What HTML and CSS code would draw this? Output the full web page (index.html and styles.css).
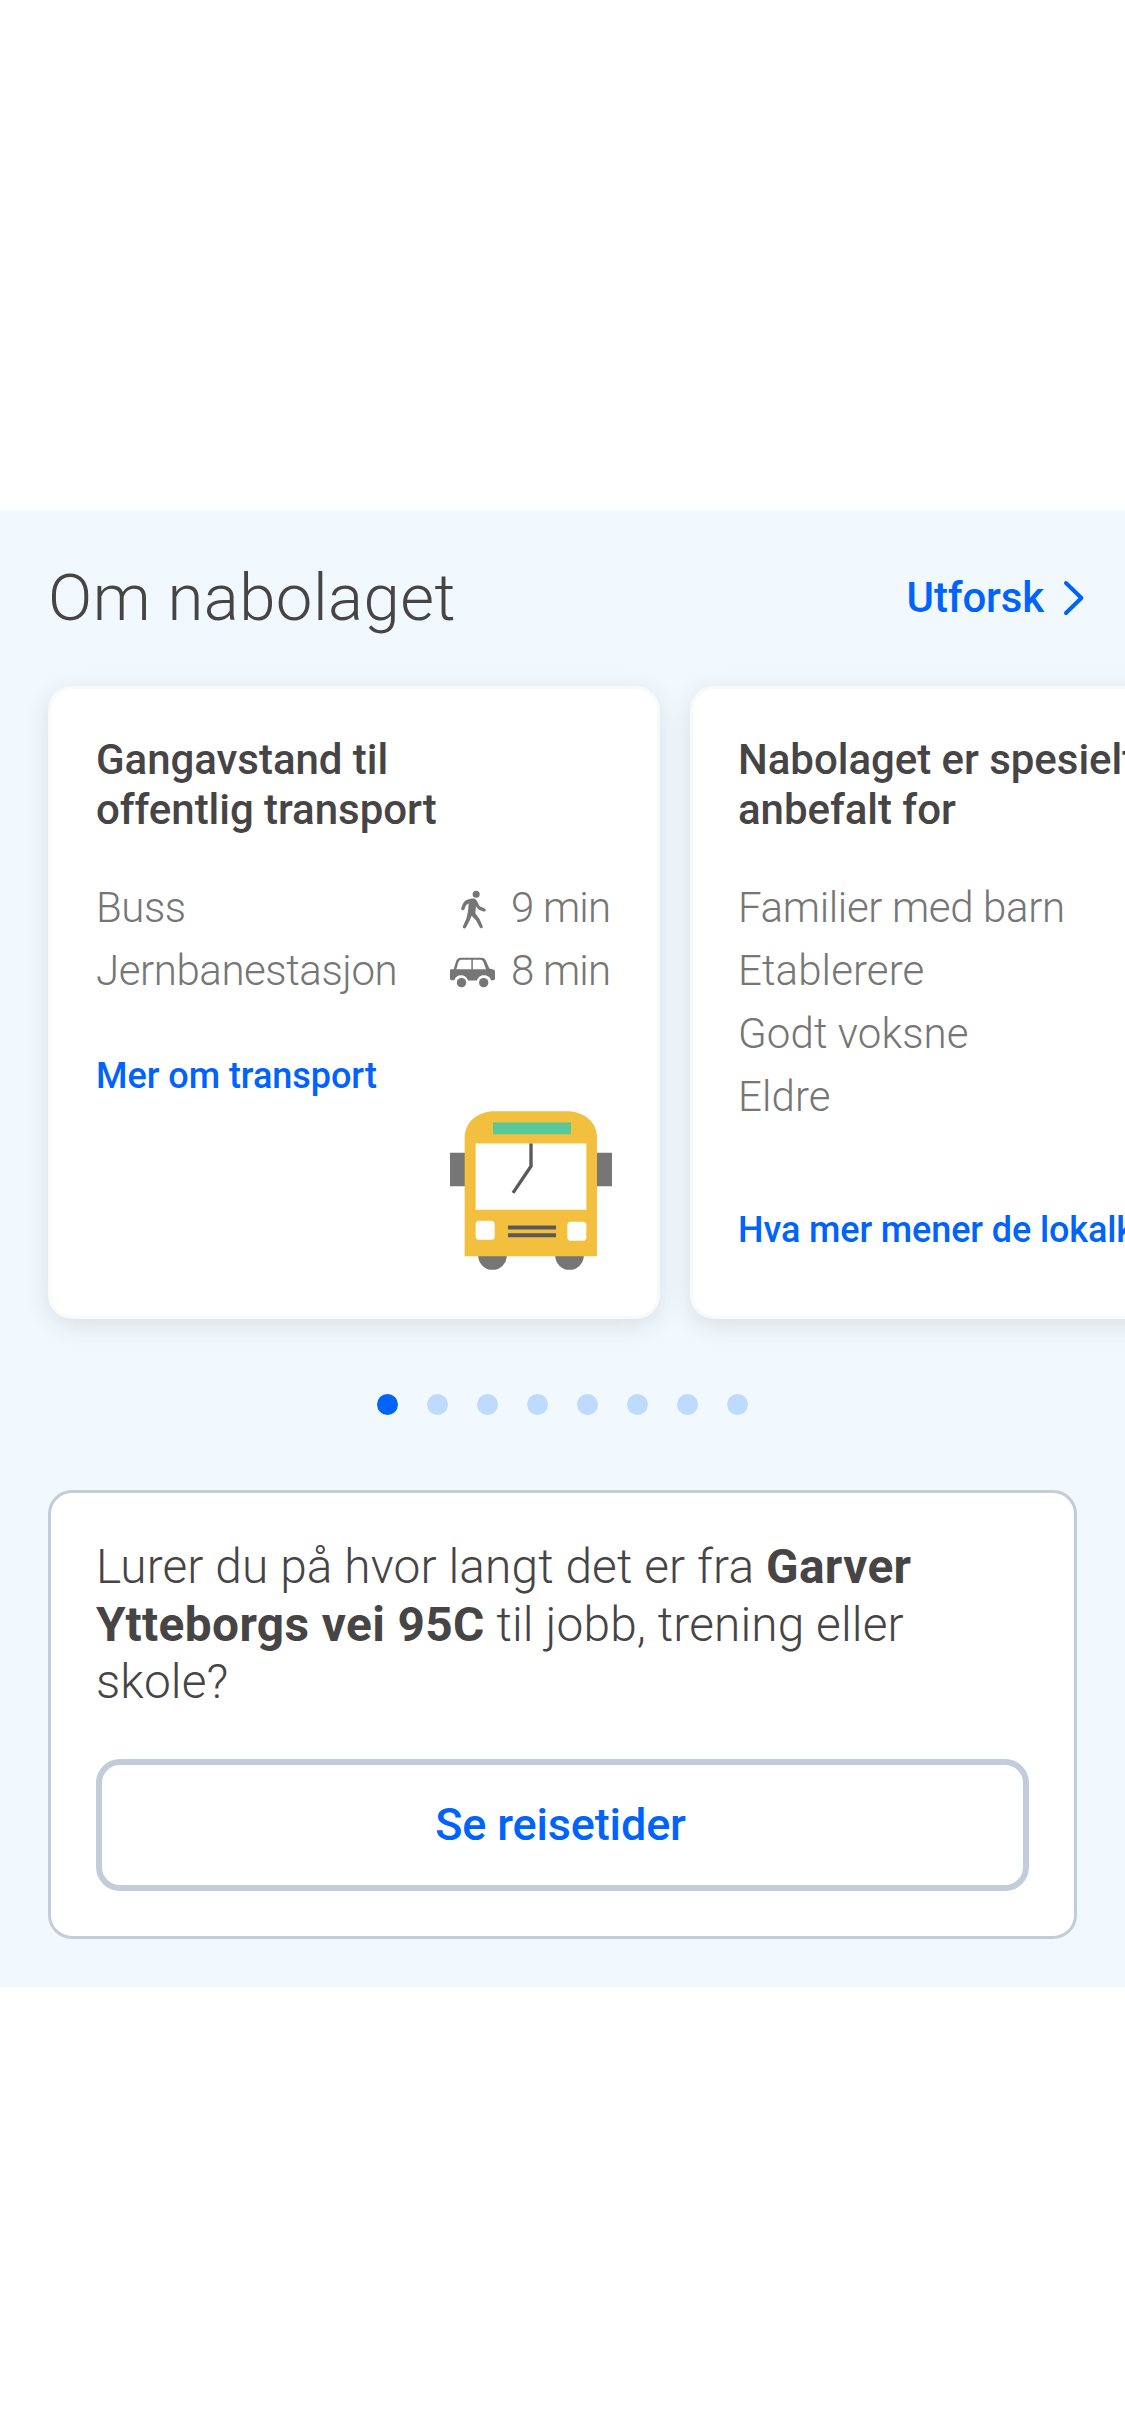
FILE: index.html
```html
<!DOCTYPE html>
<html lang="no">
<head>
<meta charset="utf-8">
<title>Om nabolaget</title>
<link rel="stylesheet" href="styles.css">
</head>
<body>
<section class="area">
  <header class="area-header">
    <h2 class="area-title">Om nabolaget</h2>
    <a class="explore">Utforsk
      <svg class="chevron" viewBox="0 0 22 36" aria-hidden="true"><path d="M3 3 L18.4 18 L3 33" fill="none" stroke="#0063fb" stroke-width="4" stroke-linecap="round" stroke-linejoin="round"/></svg>
    </a>
  </header>

  <div class="carousel">
    <article class="card">
      <h3 class="card-title">Gangavstand til<br>offentlig transport</h3>
      <ul class="list">
        <li class="row"><span>Buss</span>
          <span class="travel">
            <svg class="mode" viewBox="57 40.5 144 144" aria-hidden="true">
              <circle cx="138.500" cy="74" r="10.500" fill="#767676"/>
              <path d="M122 88 C111 90 103 94 99 102 L93.500 116 C92 121 100 125 103 120 L108 107 L116 101 C115 113 115 124 112 135 L109 148 L98.500 171 C97 177 105 179 108 174 L119 153 L125 139 L139 154 L149 173 C152 179 160 176 158 170 L149 149 L136 131 L138 110 C142 118 148 122 161 126 C167 128 170 120 164 117 L149 110 L140 93 C136 87 130 86 122 88Z" fill="#767676"/>
            </svg>
            <span class="minutes">9 min</span>
          </span>
        </li>
        <li class="row"><span>Jernbanestasjon</span>
          <span class="travel">
            <svg class="mode" viewBox="57 229.500 144 144" aria-hidden="true">
              <path fill-rule="evenodd" d="M93 265 H155 C161 265 165 268 168 274 L178 297 L190 300 Q195 301 195 306 V327 Q195 332 190 332 H183 C178 313 147 311 141 333 H114 C108 311 78 313 73 332 H65 Q60 332 60 327 V303 Q60 299 64 299 H71 L78 276 Q82 265 93 265Z M124 271 H95 Q88 271 85 278 L79 299 H124Z M128.500 271 V299 H168 L160 277 Q157 271 151 271Z" fill="#767676"/>
              <circle cx="94.500" cy="339.500" r="14" fill="#767676"/><circle cx="161" cy="339.500" r="14" fill="#767676"/>
            </svg>
            <span class="minutes">8 min</span>
          </span>
        </li>
      </ul>
      <a class="card-link">Mer om transport</a>
      <svg class="bus" viewBox="60 61.500 486 477" aria-hidden="true">
        <path d="M60 187h45v100H60zM501 187h45v100h-45z" fill="#767676"/>
        <circle cx="187.500" cy="495" r="43" fill="#767676"/><circle cx="418.500" cy="495" r="43" fill="#767676"/>
        <path d="M104 497V140C104 94 144 62 194 62H411C461 62 501 94 501 140V497Z" fill="#f3bf3f"/>
        <path d="M189 96h234v35H189z" fill="#59c898"/>
        <path d="M137 159h332v199H137z" fill="#fff"/>
        <rect x="137" y="391" width="57" height="57" rx="11" fill="#fff"/><rect x="412" y="394" width="57" height="57" rx="11" fill="#fff"/>
        <path d="M234 411h144M234 434.500h144" stroke="#58595b" stroke-width="12"/>
        <path d="M303 159V227L249 307" fill="none" stroke="#58595b" stroke-width="10"/>
      </svg>
    </article>

    <article class="card card-tips">
      <h3 class="card-title">Nabolaget er spesielt anbefalt for</h3>
      <ul class="list">
        <li class="row">Familier med barn</li>
        <li class="row">Etablerere</li>
        <li class="row">Godt voksne</li>
        <li class="row">Eldre</li>
      </ul>
      <a class="card-link">Hva mer mener de lokalkjente</a>
    </article>
  </div>

  <div class="dots">
    <span class="dot dot-active"></span><span class="dot"></span><span class="dot"></span><span class="dot"></span><span class="dot"></span><span class="dot"></span><span class="dot"></span><span class="dot"></span>
  </div>

  <div class="commute">
    <p class="commute-text">Lurer du på hvor langt det er fra <b>Garver Ytteborgs vei 95C</b> til jobb, trening eller skole?</p>
    <a class="button">Se reisetider</a>
  </div>
</section>
</body>
</html>
```

FILE: styles.css
```css
* { box-sizing: border-box; }

body {
  margin: 0;
  min-height: 2436px;
  padding-top: 510px;
  background: #fff;
  color: #474445;
  font-family: Roboto, "Liberation Sans", sans-serif;
  font-weight: 300;
  overflow-x: hidden;
}

h2, h3, p, ul { margin: 0; padding: 0; }

.area {
  padding: 50px 48px 48px;
  background: #f1f9ff;
  overflow: hidden;
}

.area-header {
  display: flex;
  align-items: center;
  justify-content: space-between;
  height: 76px;
  margin-right: -8px;
}

.area-title {
  font-size: 65.3px;
  line-height: 76px;
  font-weight: 300;
  letter-spacing: 0.45px;
}

.explore {
  display: flex;
  align-items: center;
  gap: 19px;
  color: #0063fb;
  font-size: 42px;
  line-height: 50px;
  font-weight: 500;
  letter-spacing: -0.15px;
}

.chevron { width: 22px; height: 36px; }

.carousel {
  display: flex;
  gap: 30px;
  margin-top: 50px;
}

.card {
  display: flex;
  flex: 0 0 612px;
  flex-direction: column;
  height: 633px;
  padding: 45.6px 45px 46px;
  border: 3px solid #f8f9fb;
  border-radius: 24px;
  background: #fff;
  box-shadow: 0 6px 24px rgba(40, 40, 30, 0.12);
}

.card-title {
  font-size: 42px;
  line-height: 50px;
  font-weight: 500;
  letter-spacing: -0.04px;
}

.list {
  margin-top: 41.2px;
  list-style: none;
  color: #767676;
}

.row {
  display: flex;
  align-items: center;
  justify-content: space-between;
  font-size: 42px;
  line-height: 63px;
  letter-spacing: -0.42px;
}

.card-tips .row { letter-spacing: 0.1px; }
.card-tips .row:first-child { letter-spacing: -0.35px; }

.travel { display: flex; align-items: center; gap: 14px; }
.mode { width: 48px; height: 48px; }
.minutes { width: 101px; letter-spacing: -0.8px; white-space: nowrap; }

.card-link {
  margin-top: 51px;
  color: #0063fb;
  font-size: 36px;
  line-height: 46px;
  font-weight: 500;
  letter-spacing: -0.04px;
  white-space: nowrap;
}

.card-tips .card-link { margin-top: 79px; letter-spacing: -0.12px; }

.bus {
  align-self: flex-end;
  flex: none;
  width: 162px;
  height: 159px;
  margin-top: auto;
}

.dots {
  display: flex;
  justify-content: center;
  gap: 29px;
  margin: 75px 0;
}

.dot {
  width: 21px;
  height: 21px;
  border-radius: 50%;
  background: #bfdaff;
}

.dot-active { background: #0063fb; }

.commute {
  padding: 46px 45px 45px;
  border: 3px solid #c3ccd9;
  border-radius: 24px;
  background: #fff;
}

.commute-text {
  font-size: 47.8px;
  line-height: 57.6px;
  letter-spacing: 0.13px;
}

.commute-text b { font-weight: 700; letter-spacing: 0.38px; }

.button {
  display: flex;
  align-items: center;
  justify-content: center;
  height: 132px;
  margin-top: 47px;
  padding-right: 4px;
  border: 6px solid #c3ccd9;
  border-radius: 24px;
  color: #0063fb;
  font-size: 45px;
  font-weight: 500;
  letter-spacing: -0.15px;
}
```
